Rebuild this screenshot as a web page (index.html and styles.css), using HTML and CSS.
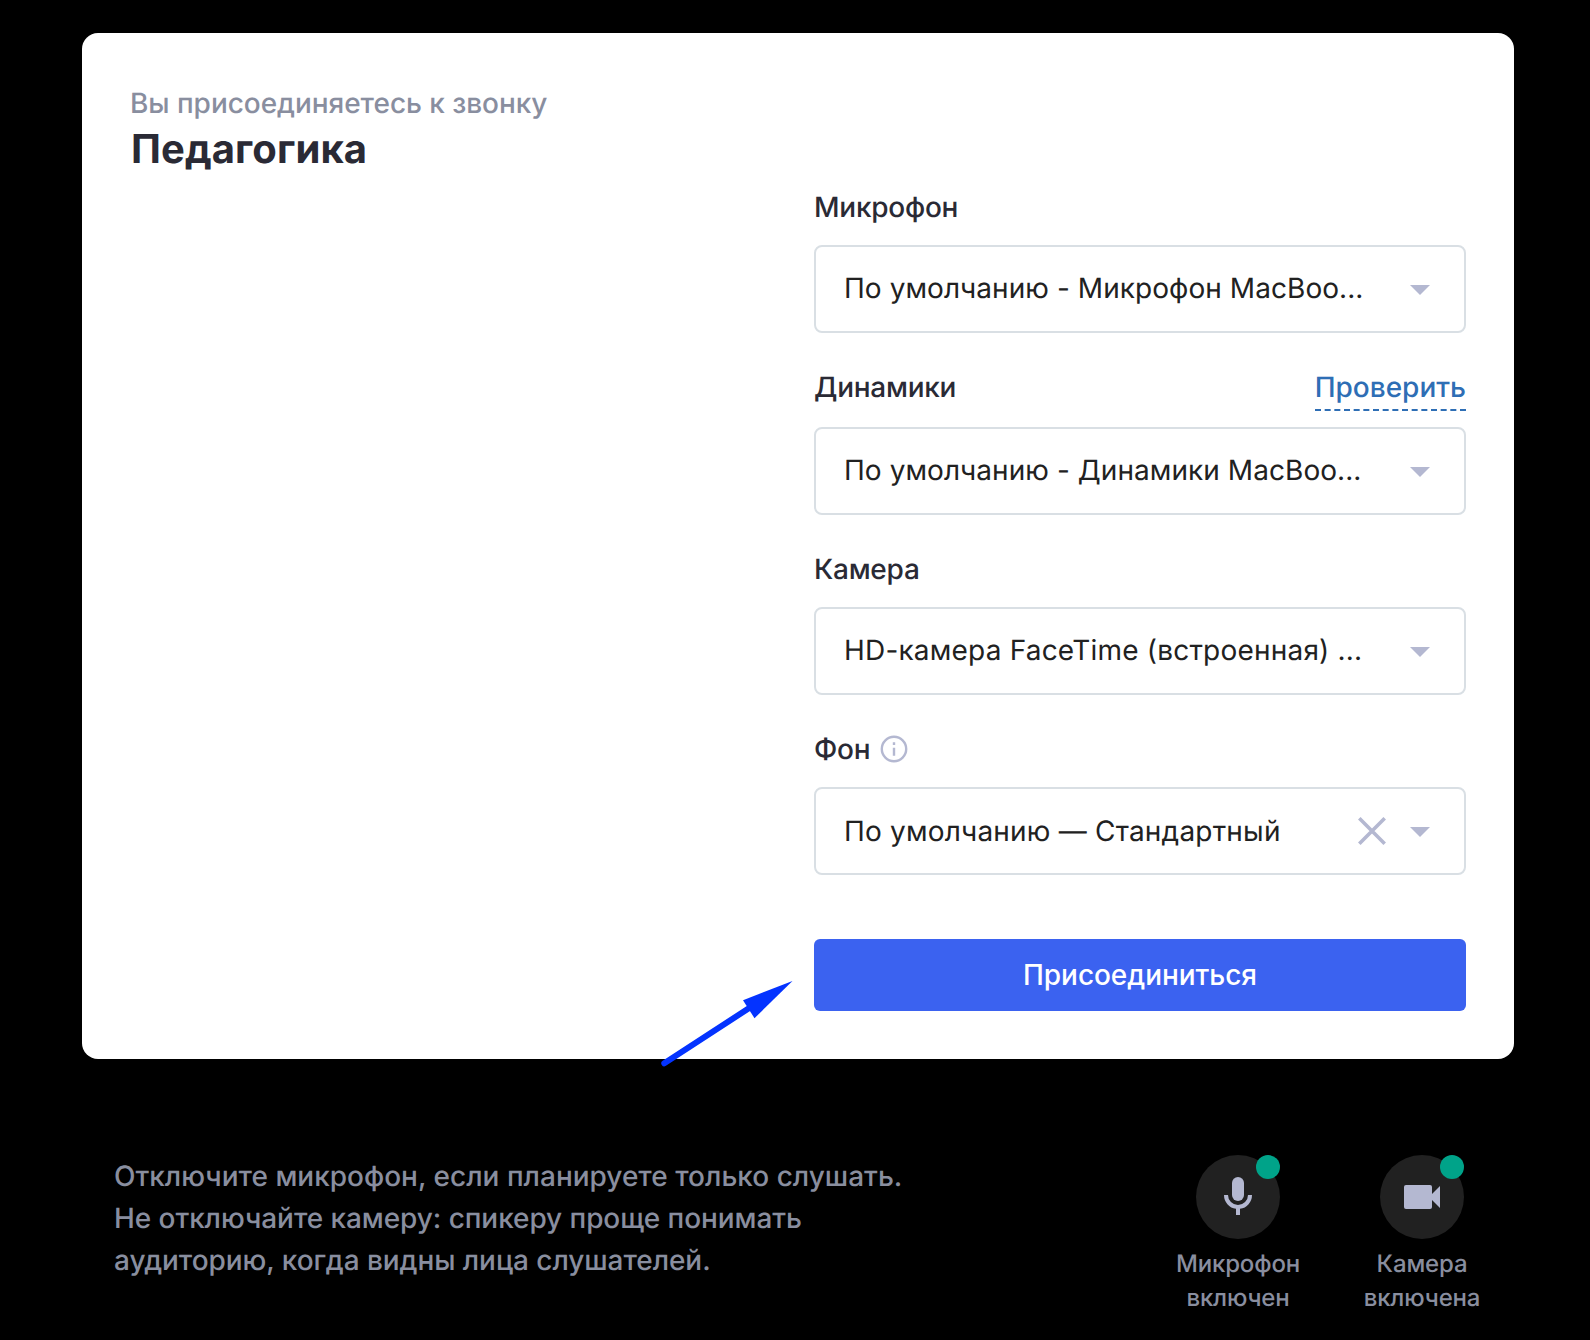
FILE: index.html
```
<!DOCTYPE html>
<html lang="ru">
<head>
<meta charset="utf-8">
<title>Педагогика</title>
<link rel="stylesheet" href="styles.css">
</head>
<body>
<main class="card">
  <header class="head">
    <p class="lead">Вы присоединяетесь к звонку</p>
    <h1 class="title">Педагогика</h1>
  </header>
  <form class="form">
    <div class="field">
      <div class="label-row"><span class="label">Микрофон</span></div>
      <div class="select"><span class="value">По умолчанию - Микрофон MacBoo...</span><svg class="caret" viewBox="0 0 20 10"><path d="M0 0h20L10 10z"/></svg></div>
    </div>
    <div class="field field-link">
      <div class="label-row"><span class="label">Динамики</span><a class="check">Проверить</a></div>
      <div class="select"><span class="value">По умолчанию - Динамики MacBoo...</span><svg class="caret" viewBox="0 0 20 10"><path d="M0 0h20L10 10z"/></svg></div>
    </div>
    <div class="field">
      <div class="label-row"><span class="label">Камера</span></div>
      <div class="select"><span class="value value-camera">HD-камера FaceTime (встроенная) ...</span><svg class="caret" viewBox="0 0 20 10"><path d="M0 0h20L10 10z"/></svg></div>
    </div>
    <div class="field">
      <div class="label-row"><span class="label">Фон</span><svg class="info" viewBox="0 0 28 28"><circle cx="14" cy="14" r="12.2"/><path d="M14 12.8v8M14 7.2v2.8"/></svg></div>
      <div class="select"><span class="value value-background">По умолчанию — Стандартный</span><svg class="clear" viewBox="0 0 28 28"><path d="M1.3 1.3l25.4 25.4M26.7 1.3L1.3 26.7"/></svg><svg class="caret" viewBox="0 0 20 10"><path d="M0 0h20L10 10z"/></svg></div>
    </div>
    <button class="join" type="button">Присоединиться</button>
  </form>
  <svg class="arrow" viewBox="0 0 140 90"><path class="shaft" d="M4.3 83.3L90 27.5"/><path class="tip" d="M132.5 1L83 20.2L94.5 38.2z"/></svg>
</main>
<footer class="footer">
  <p class="hint">Отключите микрофон, если планируете только слушать.<br><span class="hint-rest">Не отключайте камеру: спикеру проще понимать<br>аудиторию, когда видны лица слушателей.</span></p>
  <div class="devices">
    <div class="device">
      <div class="round"><svg class="glyph" viewBox="0 0 84 84"><rect x="36" y="22" width="12" height="24" rx="6"/><path d="M28 40h4a10 10 0 0 0 20 0h4a14 14 0 0 1-12 13.86V60h-4v-6.14A14 14 0 0 1 28 40z"/></svg><span class="dot"></span></div>
      <span class="caption">Микрофон<br>включен</span>
    </div>
    <div class="device">
      <div class="round"><svg class="glyph" viewBox="0 0 84 84"><rect x="24" y="30" width="28" height="24" rx="2"/><path d="M52 39l8-8v22l-8-8z"/></svg><span class="dot"></span></div>
      <span class="caption">Камера<br>включена</span>
    </div>
  </div>
</footer>
</body>
</html>
```
FILE: styles.css
```
* { box-sizing: border-box; }
body {
  margin: 0;
  height: 1340px;
  padding: 33px 76px 0 82px;
  overflow: hidden;
  background: #000;
  font-family: Inter, "Liberation Sans", sans-serif;
  font-size: 28px;
  font-weight: 500;
  text-rendering: geometricPrecision;
}
p, h1 { margin: 0; }
.card {
  position: relative;
  height: 1026px;
  padding: 48px;
  border-radius: 16px;
  background: #fff;
  color: #2a2a35;
}
.head { height: 104px; }
.lead { padding-top: 2px; line-height: 40px; letter-spacing: -0.05px; color: #898e9f; }
.title { margin: 2px 0 0 1px; font-size: 40px; line-height: 48px; font-weight: 700; letter-spacing: 0.1px; }
.form { width: 652px; margin-left: auto; }
.field { height: 180px; }
.field:first-child { height: 178px; }
.label-row { display: flex; align-items: flex-start; height: 60px; padding-top: 2px; line-height: 40px; }
.field-link .label-row { height: 64px; padding-top: 4px; }
.field-link { height: 184px; }
.label { letter-spacing: -0.25px; }
.check {
  margin-left: auto;
  height: 44px;
  border-bottom: 2px dashed #2e6eb5;
  color: #2e6eb5;
}
.info { width: 28px; height: 28px; margin: 6px 0 0 10px; fill: none; stroke: #b4b8d1; stroke-width: 2.4; }
.select {
  display: flex;
  align-items: center;
  height: 88px;
  padding: 0 34px 0 28px;
  border: 2px solid #d9dfe4;
  border-radius: 8px;
  color: #212121;
  font-weight: 400;
}
.value { flex: 1; padding-bottom: 2px; white-space: nowrap; letter-spacing: 0.06px; }
.value-camera { letter-spacing: 0.2px; }
.value-background { padding-bottom: 0; letter-spacing: 0.2px; }
.caret { width: 20px; height: 10px; margin-top: 2px; fill: #b4b8d1; }
.clear { width: 28px; height: 28px; margin-right: 24px; stroke: #b4b8d1; stroke-width: 3.6; }
.join {
  display: block;
  width: 100%;
  height: 72px;
  margin-top: 32px;
  padding: 0;
  border: 0;
  border-radius: 6px;
  background: #3b62f0;
  color: #fff;
  font: inherit;
  letter-spacing: -0.05px;
}
.arrow { position: absolute; left: 578px; top: 947px; width: 140px; height: 90px; }
.shaft { stroke: #0433ff; stroke-width: 6; stroke-linecap: round; }
.tip { fill: #0433ff; }
.footer { display: flex; justify-content: space-between; padding: 96px 0 0 32px; }
.hint { line-height: 42px; color: #898e9f; }
.hint-rest { letter-spacing: -0.07px; }
.devices { display: flex; }
.device { width: 184px; text-align: center; }
.round { position: relative; width: 84px; height: 84px; margin: 0 auto 8px; border-radius: 50%; background: #212121; }
.glyph { display: block; width: 84px; height: 84px; fill: #b4b8d1; }
.dot { position: absolute; top: 0; right: 0; width: 24px; height: 24px; border-radius: 50%; background: #00a389; }
.caption { display: block; font-size: 24px; line-height: 34px; letter-spacing: -0.15px; color: #898e9f; }
```
